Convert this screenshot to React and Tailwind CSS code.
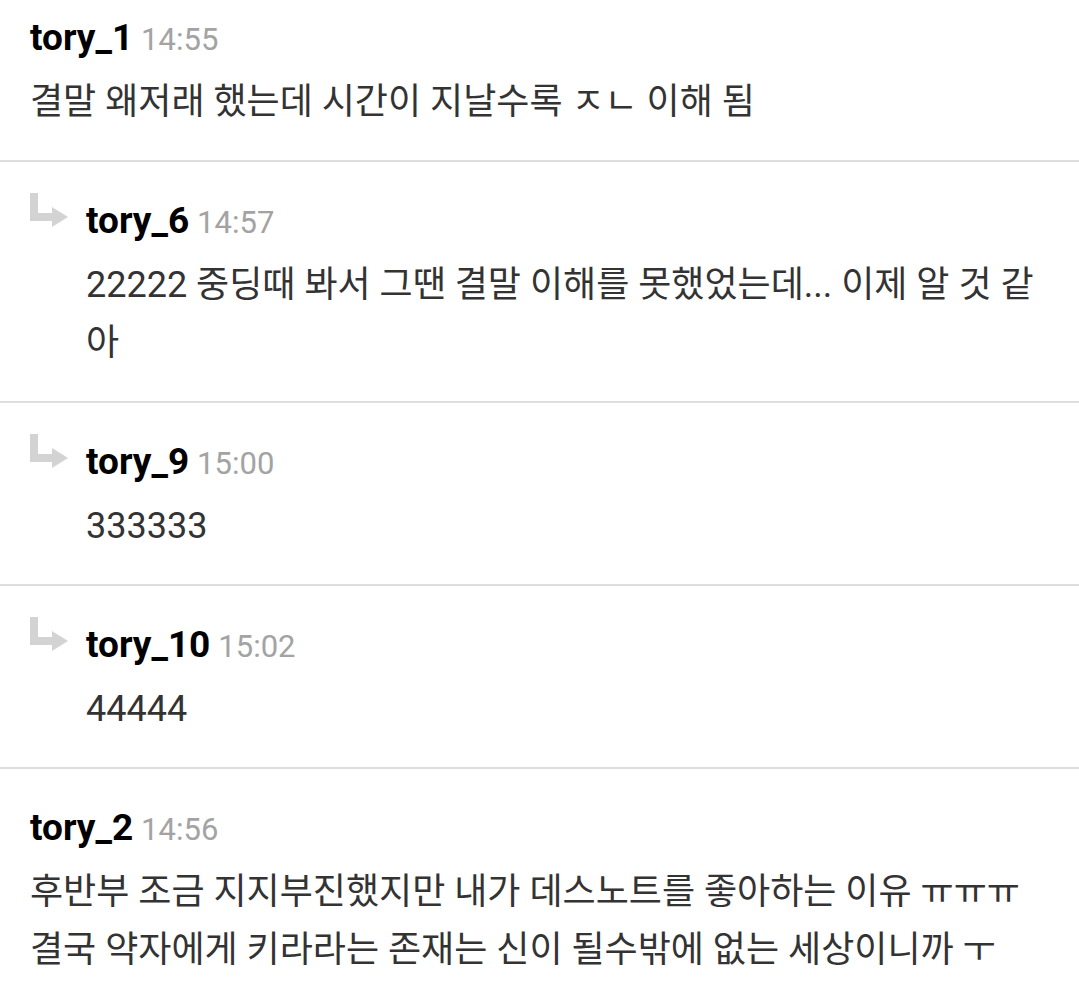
import React from "react";

const comments = [
  { id: 1, user: "tory_1", time: "14:55", text: "결말 왜저래 했는데 시간이 지날수록 ㅈㄴ 이해 됨" },
  { id: 6, user: "tory_6", time: "14:57", reply: true, text: "22222 중딩때 봐서 그땐 결말 이해를 못했었는데... 이제 알 것 같아" },
  { id: 9, user: "tory_9", time: "15:00", reply: true, text: "333333" },
  { id: 10, user: "tory_10", time: "15:02", reply: true, text: "44444" },
  {
    id: 2,
    user: "tory_2",
    time: "14:56",
    text: "후반부 조금 지지부진했지만 내가 데스노트를 좋아하는 이유 ㅠㅠㅠ 결국 약자에게 키라라는 존재는 신이 될수밖에 없는 세상이니까 ㅜ",
  },
];

// reply marker: grey L-shaped arrow
function ReplyArrow() {
  return (
    <svg width="38" height="37" viewBox="0 0 38 37" fill="#d3d3d3">
      <rect x="0" y="0" width="8" height="28" />
      <rect x="0" y="20" width="25" height="8" />
      <polygon points="22,14 38,24 22,34" />
    </svg>
  );
}

function Comment({ c }) {
  return (
    <div className="flex border-b-2 border-[#dedede] pt-[37px] pb-[29px] px-[30px] first:pt-[16px]">
      {c.reply && (
        <div className="w-[56px] shrink-0">
          <div className="mt-[-6px]">
            <ReplyArrow />
          </div>
        </div>
      )}
      <div className="min-w-0 flex-1">
        <div className="flex items-baseline gap-[8px] leading-[44px]">
          <span className="text-[37px] font-bold text-black">{c.user}</span>
          <span className="text-[31px] text-[#a3a3a3]">{c.time}</span>
        </div>
        <p className="mt-[11px] text-[36px] leading-[58px] text-[#333333]">{c.text}</p>
      </div>
    </div>
  );
}

export default function App() {
  return (
    <div
      className="min-h-[1001px] w-[1079px] overflow-hidden bg-white"
      style={{ fontFamily: 'Roboto, "Noto Sans CJK KR", sans-serif' }}
    >
      {comments.map((c) => (
        <Comment key={c.id} c={c} />
      ))}
    </div>
  );
}
